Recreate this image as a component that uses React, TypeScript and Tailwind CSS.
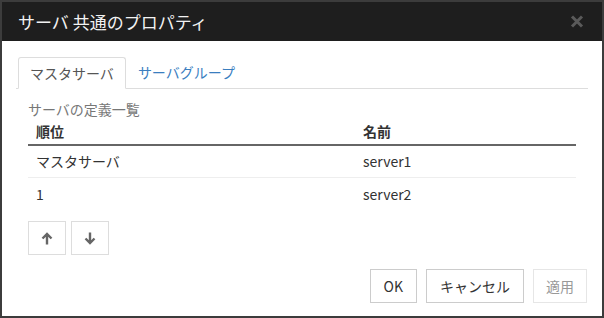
const font = { fontFamily: '"Noto Sans CJK JP", "Noto Sans", sans-serif' };

function ArrowIcon({ dir }: { dir: 'up' | 'down' }) {
  return (
    <svg width="12" height="13" viewBox="0 0 12 13" className={dir === 'down' ? 'rotate-180' : ''}>
      <path d="M6 12.5V2.5M1.5 6.5L6 2l4.5 4.5" fill="none" stroke="#666" strokeWidth="2.4" />
    </svg>
  );
}

const rows = [
  { order: 'マスタサーバ', name: 'server1' },
  { order: '1', name: 'server2' },
];

export default function App() {
  return (
    <div
      className="w-[604px] h-[318px] border-2 border-[#3c3c3c] bg-white flex flex-col text-[14px] text-[#333]"
      style={font}
    >
      <div className="h-[39px] bg-[#1e1e1e] flex items-center justify-between pl-[16px] pr-[18px]">
        <span className="text-[17px] text-[#f2f2f2] leading-none">サーバ 共通のプロパティ</span>
        <svg width="14" height="13" viewBox="0 0 14 13">
          <path d="M2 1.5l10 10M12 1.5l-10 10" stroke="#5a5a5a" strokeWidth="3" />
        </svg>
      </div>

      <div className="flex-1 px-[14px] pt-[16px] flex flex-col">
        <div className="flex h-[32px] border-b border-[#ddd] pl-[2px]">
          <div className="h-[32px] px-[11px] flex items-center border border-[#ddd] border-b-white bg-white rounded-t-[3px] text-[#555]">
            マスタサーバ
          </div>
          <div className="h-[31px] px-[12px] flex items-center text-[#3a7ebf]">サーバグループ</div>
        </div>

        <div className="px-[12px] flex flex-col">
          <div className="mt-[11px] h-[18px] flex items-center text-[#777]">サーバの定義一覧</div>
          <div className="flex flex-col w-[548px]">
            <div className="flex h-[28px] items-center border-b-2 border-[#666] font-bold">
              <div className="w-[327px] pl-[8px]">順位</div>
              <div className="flex-1 pl-[8px]">名前</div>
            </div>
            {rows.map((r, i) => (
              <div
                key={r.name}
                className={`flex h-[32px] items-center ${i === 0 ? 'border-b border-[#eee]' : ''}`}
              >
                <div className="w-[327px] pl-[8px]">{r.order}</div>
                <div className="flex-1 pl-[8px]">{r.name}</div>
              </div>
            ))}
          </div>

          <div className="mt-[11px] flex gap-[5px]">
            <button className="w-[38px] h-[34px] border border-[#ddd] flex items-center justify-center bg-white">
              <ArrowIcon dir="up" />
            </button>
            <button className="w-[38px] h-[34px] border border-[#ddd] flex items-center justify-center bg-white">
              <ArrowIcon dir="down" />
            </button>
          </div>
        </div>

        <div className="mt-[14px] flex justify-end gap-[9px] pr-[1px]">
          <button className="h-[34px] px-[13px] border border-[#ccc] bg-white text-[#333]">OK</button>
          <button className="h-[34px] px-[13px] border border-[#ccc] bg-white text-[#333]">キャンセル</button>
          <button className="h-[34px] px-[12px] border border-[#e6e6e6] bg-white text-[#999]">適用</button>
        </div>
      </div>
    </div>
  );
}
